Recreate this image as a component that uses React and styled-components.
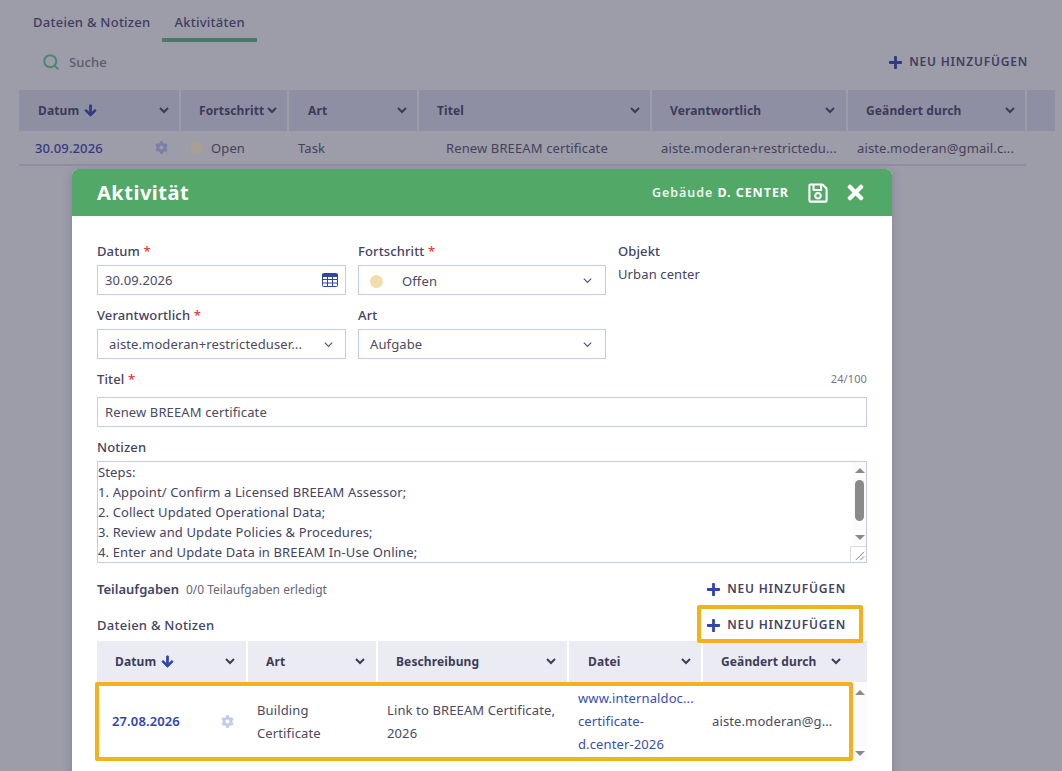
import React from 'react';
import styled, { createGlobalStyle } from 'styled-components';
import { FaPlus, FaArrowDown, FaCog, FaRegSave, FaTimes } from 'react-icons/fa';
import { Search as SearchGlyph } from 'lucide-react';

const Global = createGlobalStyle`
  html, body { margin: 0; height: 100%; overflow: hidden; }
  body { font-family: "Noto Sans", "Open Sans", sans-serif; font-size: 13px; letter-spacing: 0.12px; }
  * { box-sizing: border-box; }
`;

const Page = styled.div`
  position: relative;
  width: 1062px;
  height: 771px;
  overflow: hidden;
  background: #9d9ca9;
  color: #45435f;
`;

// Dimmed page behind the dialog
const Tabs = styled.div`
  display: flex;
  height: 42px;
  padding-left: 21px;
`;

const Tab = styled.div`
  height: 42px;
  padding: 14px 12px 0;
  font-weight: 500;
  line-height: 17px;
  letter-spacing: 0.25px;
  color: #3f3d60;
  border-bottom: ${p => (p.$active ? '4px solid #4a7a66' : '0')};
`;

const Toolbar = styled.div`
  display: flex;
  align-items: center;
  justify-content: space-between;
  height: 48px;
  padding: 0 34px 8px 42px;
`;

const SearchBox = styled.div`
  display: flex;
  align-items: center;
  gap: 9px;
  font-weight: 500;
  color: #5c5b6c;
`;

const AddButton = styled.div`
  display: flex;
  align-items: center;
  gap: 6px;
  font-size: 12px;
  font-weight: 600;
  letter-spacing: 0.8px;
  line-height: 16px;
  color: ${p => (p.$dim ? '#3f3d60' : '#45435f')};
  svg { color: ${p => (p.$dim ? '#33397f' : '#2f45ad')}; }
`;

const BackTable = styled.div`
  margin-left: 19px;
  width: 1029px;
`;

const BackHead = styled.div`
  display: grid;
  grid-template-columns: 160px 106px 128px 231px 194px 177px 22px;
  column-gap: 2px;
  height: 41px;
`;

const HeadCell = styled.div`
  display: flex;
  align-items: center;
  justify-content: space-between;
  min-width: 0;
  padding: ${p => p.$pad || '0 9px 1px 19px'};
  background: ${p => (p.$light ? '#ebebf3' : '#8f8fa3')};
  font-size: 12px;
  font-weight: 700;
  color: ${p => (p.$light ? '#3e3c5a' : '#3c3a59')};
  white-space: nowrap;
`;

const HeadLabel = styled.span`
  display: flex;
  align-items: center;
  gap: 5px;
  svg {
    color: ${p => (p.$light ? '#2f45ad' : '#33397f')};
    stroke: currentColor;
    stroke-width: 30px;
  }
`;

const BackRow = styled.div`
  display: grid;
  grid-template-columns: 156px 123px 148px 215px 196px 169px;
  width: 1007px;
  height: 35px;
  align-items: center;
  border-bottom: 2px solid #8f8fa3;
  color: #44425a;
  white-space: nowrap;
`;

const BackCell = styled.div`
  display: flex;
  align-items: center;
  justify-content: space-between;
  padding-left: ${p => p.$left || 0}px;
  padding-right: ${p => p.$right || 0}px;
  gap: 8px;
  min-width: 0;
`;

const DateLink = styled.span`
  font-weight: ${p => (p.$bold ? 600 : 500)};
  color: ${p => (p.$bold ? '#2f45ad' : '#33397f')};
`;

const Dot = styled.span`
  display: inline-block;
  width: 13px;
  height: 13px;
  border-radius: 50%;
  background: ${p => p.$color};
`;

const StatusCell = styled.div`
  display: flex;
  align-items: center;
  gap: 8px;
`;

// Dialog
const Dialog = styled.div`
  position: absolute;
  left: 72px;
  top: 169px;
  width: 820px;
  height: 640px;
  background: #fff;
  border-radius: 6px 6px 0 0;
  box-shadow: 0 2px 10px rgba(60, 58, 90, 0.25);
`;

const DialogHeader = styled.header`
  display: flex;
  align-items: center;
  justify-content: space-between;
  height: 47px;
  padding: 0 25px;
  background: #52a866;
  border-radius: 6px 6px 0 0;
  color: #fff;
`;

const DialogTitle = styled.h1`
  margin: 0;
  font-size: 20px;
  font-weight: 700;
  letter-spacing: 0.5px;
  line-height: 30px;
`;

const HeaderRight = styled.div`
  display: flex;
  align-items: center;
  font-size: 12.5px;
  font-weight: 600;
  letter-spacing: 0.95px;
`;

const Building = styled.span`
  margin-right: 18px;
  color: #e9f5ec;
  b { font-weight: 700; color: #fff; }
`;

const HeaderIcon = styled.span`
  display: flex;
  margin-left: ${p => p.$gap || 0}px;
`;

const DialogBody = styled.div`
  padding: 26px 25px 0;
`;

const FormGrid = styled.div`
  display: grid;
  grid-template-columns: 249px 248px 249px;
  column-gap: 12px;
  row-gap: 11px;
`;

const Field = styled.div`
  min-width: 0;
`;

const Label = styled.div`
  display: flex;
  justify-content: space-between;
  height: ${p => p.$height || 23}px;
  line-height: 18px;
  font-weight: 500;
  color: #45435f;
  em { font-style: normal; color: #f03030; }
`;

const Counter = styled.span`
  font-size: 11px;
  font-weight: 400;
  color: #77768a;
`;

const Input = styled.div`
  display: flex;
  align-items: center;
  justify-content: space-between;
  height: 30px;
  padding: 0 ${p => p.$right || 7}px 0 ${p => p.$left || 7}px;
  border: 1px solid #c4cbe6;
  color: #4b4a60;
  white-space: nowrap;
`;

const InputValue = styled.span`
  display: flex;
  align-items: center;
  gap: 19px;
  position: relative;
  top: ${p => p.$nudge || 0}px;
`;

const WideField = styled.div`
  margin-top: 11px;
`;

const NotesBox = styled.div`
  position: relative;
  display: flex;
  justify-content: space-between;
  height: 102px;
  border: 1px solid #c4cbe6;
`;

const NotesText = styled.div`
  line-height: 20px;
  color: #45435f;
  white-space: nowrap;
`;

const ScrollRail = styled.div`
  display: flex;
  flex-direction: column;
  align-items: center;
  width: ${p => p.$width || 13}px;
  background: #fbfbfb;
  padding-top: ${p => p.$top || 6}px;
`;

const ArrowUp = styled.span`
  width: 0;
  height: 0;
  border-left: 5px solid transparent;
  border-right: 5px solid transparent;
  border-bottom: 5px solid #8a8a8a;
`;

const ArrowDown = styled.span`
  width: 0;
  height: 0;
  margin-top: ${p => p.$gap}px;
  border-left: 5px solid transparent;
  border-right: 5px solid transparent;
  border-top: 5px solid #8a8a8a;
`;

const Thumb = styled.span`
  width: 9px;
  height: 41px;
  margin-top: 7px;
  border-radius: 5px;
  background: #8a8a8a;
`;

const ResizeGrip = styled.svg`
  position: absolute;
  right: 0;
  bottom: 0;
  background: #fff;
  border-left: 1px solid #dcdcdc;
  border-top: 1px solid #dcdcdc;
`;

const SectionRow = styled.div`
  display: flex;
  align-items: center;
  justify-content: space-between;
  height: 36px;
  padding-right: 21px;
`;

const SubtaskRow = styled(SectionRow)`
  margin-top: 8px;
`;

const SectionTitle = styled.div`
  display: flex;
  align-items: baseline;
  gap: 7px;
  font-weight: 500;
  letter-spacing: ${p => p.$spacing || 0}px;
  color: #45435f;
  span { font-size: 12px; font-weight: 400; color: #66657a; }
  b { font-weight: 600; }
`;

const Highlight = styled.div`
  position: relative;
`;

const HighlightFrame = styled.div`
  position: absolute;
  left: ${p => p.$left}px;
  right: ${p => p.$right}px;
  top: ${p => p.$top}px;
  bottom: ${p => p.$bottom}px;
  border: 4px solid #f5b01f;
  border-radius: 2px;
  pointer-events: none;
`;

const FilesHead = styled.div`
  display: grid;
  grid-template-columns: 149px 128px 189px 132px 164px;
  column-gap: 2px;
  height: 41px;
  margin-top: -2px;
`;

const FilesBody = styled.div`
  display: flex;
  justify-content: space-between;
  height: 79px;
`;

const FilesRow = styled.div`
  display: grid;
  grid-template-columns: 160px 130px 191px 134px 1fr;
  width: 756px;
  align-items: center;
  color: #4b4a60;
  line-height: 23px;
`;

const LinkCell = styled.div`
  color: #3a4cb5;
  line-height: 23px;
  white-space: nowrap;
`;

const Chevron = ({ size = 12, color = 'currentColor', width = 2 }) => (
  <svg width={size} height={size} viewBox="0 0 12 12" fill="none" stroke={color} strokeWidth={width}>
    <path d="M2 4l4 4 4-4" />
  </svg>
);

const CalendarIcon = () => (
  <svg width="16" height="14" viewBox="0 0 16 14" fill="none" stroke="#2f45ad" strokeWidth="1">
    <rect x="0.5" y="0.5" width="15" height="13" rx="1" />
    <path d="M0 1.5h16v2H0z" fill="#2f45ad" />
    <path d="M0.5 6.5h15M0.5 10h15M5.5 1v12M10.5 1v12" />
  </svg>
);

const backColumns = [
  { label: 'Fortschritt', pad: '0 9px 1px 18px' },
  { label: 'Art', pad: '0 9px 1px 19px' },
  { label: 'Titel', pad: '0 9px 1px 18px' },
  { label: 'Verantwortlich', pad: '0 10px 1px 18px' },
  { label: 'Geändert durch', pad: '0 9px 1px 18px' },
];

const fileColumns = [
  { label: 'Art', pad: '0 10px 1px 18px' },
  { label: 'Beschreibung', pad: '0 10px 1px 18px' },
  { label: 'Datei', pad: '0 9px 1px 19px' },
  { label: 'Geändert durch', pad: '0 25px 1px 18px' },
];

const noteLines = [
  'Steps:',
  '1. Appoint/ Confirm a Licensed BREEAM Assessor;',
  '2. Collect Updated Operational Data;',
  '3. Review and Update Policies & Procedures;',
  '4. Enter and Update Data in BREEAM In-Use Online;',
];

export default function App() {
  return (
    <Page>
      <Global />
      <Tabs>
        <Tab>Dateien &amp; Notizen</Tab>
        <Tab $active>Aktivitäten</Tab>
      </Tabs>
      <Toolbar>
        <SearchBox>
          <SearchGlyph size={18} color="#4a8a68" strokeWidth={2.6} />
          Suche
        </SearchBox>
        <AddButton $dim><FaPlus size={15} />NEU HINZUFÜGEN</AddButton>
      </Toolbar>
      <BackTable>
        <BackHead>
          <HeadCell>
            <HeadLabel>Datum <FaArrowDown size={13} /></HeadLabel>
            <Chevron />
          </HeadCell>
          {backColumns.map(c => (
            <HeadCell key={c.label} $pad={c.pad}>
              <HeadLabel>{c.label}</HeadLabel>
              <Chevron />
            </HeadCell>
          ))}
          <HeadCell />
        </BackHead>
        <BackRow>
          <BackCell $left={16} $right={7}>
            <DateLink>30.09.2026</DateLink>
            <FaCog size={13} color="#7a7fa8" />
          </BackCell>
          <BackCell $left={15}>
            <StatusCell><Dot $color="#a99f92" />Open</StatusCell>
          </BackCell>
          <BackCell>Task</BackCell>
          <BackCell>Renew BREEAM certificate</BackCell>
          <BackCell>aiste.moderan+restrictedu...</BackCell>
          <BackCell>aiste.moderan@gmail.c...</BackCell>
        </BackRow>
      </BackTable>

      <Dialog>
        <DialogHeader>
          <DialogTitle>Aktivität</DialogTitle>
          <HeaderRight>
            <Building>Gebäude <b>D. CENTER</b></Building>
            <HeaderIcon><FaRegSave size={22} /></HeaderIcon>
            <HeaderIcon $gap={15}><FaTimes size={23} /></HeaderIcon>
          </HeaderRight>
        </DialogHeader>
        <DialogBody>
          <FormGrid>
            <Field>
              <Label><span>Datum <em>*</em></span></Label>
              <Input>
                <span>30.09.2026</span>
                <CalendarIcon />
              </Input>
            </Field>
            <Field>
              <Label><span>Fortschritt <em>*</em></span></Label>
              <Input $left={11} $right={12}>
                <InputValue $nudge={1}><Dot $color="#f3dcae" />Offen</InputValue>
                <Chevron size={11} width={1.3} color="#55546a" />
              </Input>
            </Field>
            <Field>
              <Label><span>Objekt</span></Label>
              <span>Urban center</span>
            </Field>
            <Field>
              <Label><span>Verantwortlich <em>*</em></span></Label>
              <Input $left={11} $right={11}>
                <span>aiste.moderan+restricteduser...</span>
                <Chevron size={11} width={1.3} color="#55546a" />
              </Input>
            </Field>
            <Field>
              <Label><span>Art</span></Label>
              <Input $left={11} $right={12}>
                <span>Aufgabe</span>
                <Chevron size={11} width={1.3} color="#55546a" />
              </Input>
            </Field>
          </FormGrid>
          <WideField>
            <Label $height={27}><span>Titel <em>*</em></span><Counter>24/100</Counter></Label>
            <Input>Renew BREEAM certificate</Input>
          </WideField>
          <WideField>
            <Label><span>Notizen</span></Label>
            <NotesBox>
              <NotesText>
                {noteLines.map(l => <div key={l}>{l}</div>)}
              </NotesText>
              <ScrollRail>
                <ArrowUp />
                <Thumb />
                <ArrowDown $gap={14} />
              </ScrollRail>
              <ResizeGrip width="16" height="16" viewBox="0 0 16 16" fill="none" stroke="#777" strokeWidth="1">
                <path d="M5 14L14 5M10 14l4-4" />
              </ResizeGrip>
            </NotesBox>
          </WideField>
          <SubtaskRow>
            <SectionTitle><b>Teilaufgaben</b><span>0/0 Teilaufgaben erledigt</span></SectionTitle>
            <AddButton><FaPlus size={15} />NEU HINZUFÜGEN</AddButton>
          </SubtaskRow>
          <Highlight>
            <SectionRow>
              <SectionTitle $spacing={0.25}>Dateien &amp; Notizen</SectionTitle>
              <AddButton><FaPlus size={15} />NEU HINZUFÜGEN</AddButton>
            </SectionRow>
            <HighlightFrame $left={600} $right={4} $top={-2} $bottom={0} />
          </Highlight>
          <FilesHead>
            <HeadCell $light $pad="0 10px 1px 18px">
              <HeadLabel $light>Datum <FaArrowDown size={13} /></HeadLabel>
              <Chevron />
            </HeadCell>
            {fileColumns.map(c => (
              <HeadCell key={c.label} $light $pad={c.pad}>
                <HeadLabel>{c.label}</HeadLabel>
                <Chevron />
              </HeadCell>
            ))}
          </FilesHead>
          <Highlight>
            <FilesBody>
              <FilesRow>
                <BackCell $left={15} $right={23}>
                  <DateLink $bold>27.08.2026</DateLink>
                  <FaCog size={13} color="#c5cbec" />
                </BackCell>
                <div>Building<br />Certificate</div>
                <div>Link to BREEAM Certificate,<br />2026</div>
                <LinkCell>www.internaldoc...<br />certificate-<br />d.center-2026</LinkCell>
                <div>aiste.moderan@g...</div>
              </FilesRow>
              <ScrollRail $top={8} $width={14}>
                <ArrowUp />
                <ArrowDown $gap={56} />
              </ScrollRail>
            </FilesBody>
            <HighlightFrame $left={-2} $right={14} $top={0} $bottom={0} />
          </Highlight>
        </DialogBody>
      </Dialog>
    </Page>
  );
}
